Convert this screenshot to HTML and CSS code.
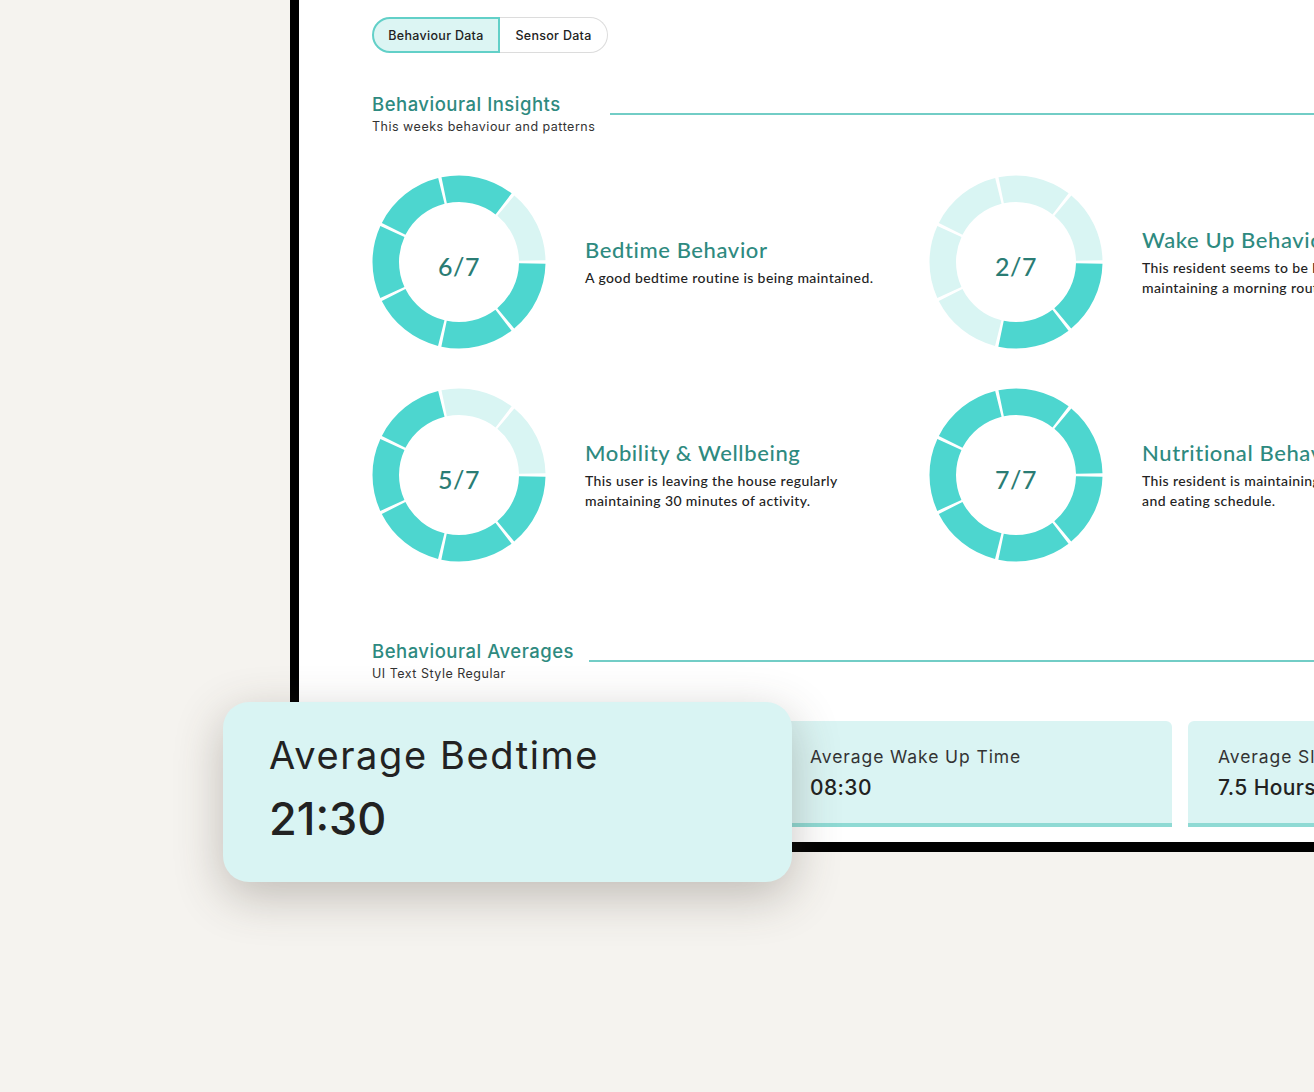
FILE: index.html
```html
<!DOCTYPE html>
<html lang="en">
<head>
    <meta charset="UTF-8">
    <meta name="viewport" content="width=device-width, initial-scale=1.0">
    <title>Behaviour Data</title>
    <link rel="stylesheet" href="styles.css">
</head>
<body>
    <div class="stage">
        <div class="device">
            <div class="tabs">
                <button class="tab tab-active">Behaviour Data</button>
                <button class="tab">Sensor Data</button>
            </div>

            <div class="section-head">
                <div class="section-text">
                    <h2>Behavioural Insights</h2>
                    <p>This weeks behaviour and patterns</p>
                </div>
                <div class="section-line"></div>
            </div>

            <div class="insights">
                <div class="insight">
                    <div class="donut" data-score="6"><span>6/7</span></div>
                    <div class="insight-text">
                        <h3>Bedtime Behavior</h3>
                        <p>A good bedtime routine is being maintained.</p>
                    </div>
                </div>
                <div class="insight">
                    <div class="donut" data-score="2"><span>2/7</span></div>
                    <div class="insight-text">
                        <h3>Wake Up Behaviour</h3>
                        <p>This resident seems to be having trouble<br>maintaining a morning routine.</p>
                    </div>
                </div>
                <div class="insight">
                    <div class="donut" data-score="5"><span>5/7</span></div>
                    <div class="insight-text">
                        <h3>Mobility &amp; Wellbeing</h3>
                        <p>This user is leaving the house regularly<br>maintaining 30 minutes of activity.</p>
                    </div>
                </div>
                <div class="insight">
                    <div class="donut" data-score="7"><span>7/7</span></div>
                    <div class="insight-text">
                        <h3>Nutritional Behaviour</h3>
                        <p>This resident is maintaining a healthy drinking<br>and eating schedule.</p>
                    </div>
                </div>
            </div>

            <div class="section-head section-averages">
                <div class="section-text">
                    <h2>Behavioural Averages</h2>
                    <p>UI Text Style Regular</p>
                </div>
                <div class="section-line"></div>
            </div>

            <div class="averages">
                <!-- first card is shown enlarged by .highlight-card -->
                <div class="avg-card avg-card-raised"></div>
                <div class="avg-card">
                    <div class="avg-label">Average Wake Up Time</div>
                    <div class="avg-value">08:30</div>
                </div>
                <div class="avg-card">
                    <div class="avg-label">Average Sleep Duration</div>
                    <div class="avg-value">7.5 Hours</div>
                </div>
            </div>
        </div>

        <div class="highlight-card">
            <div class="highlight-label">Average Bedtime</div>
            <div class="highlight-value">21:30</div>
        </div>
    </div>

    <script>
// build the 7-part ring for every donut, filled parts start at 3 o'clock
const SVG_NS = 'http://www.w3.org/2000/svg';
const RADIUS = 73.25;
const PARTS = 7;
const GAP = 3;

document.querySelectorAll('.donut').forEach(donut => {
    const score = parseInt(donut.dataset.score, 10);
    const circumference = 2 * Math.PI * RADIUS;
    const part = circumference / PARTS;
    const gapDeg = GAP / circumference * 360;

    const svg = document.createElementNS(SVG_NS, 'svg');
    svg.setAttribute('viewBox', '0 0 174 174');
    svg.setAttribute('width', '174');
    svg.setAttribute('height', '174');

    for (let i = 0; i < PARTS; i++) {
        const seg = document.createElementNS(SVG_NS, 'circle');
        seg.setAttribute('cx', '87');
        seg.setAttribute('cy', '87');
        seg.setAttribute('r', RADIUS);
        seg.setAttribute('class', i < score ? 'seg seg-on' : 'seg seg-off');
        seg.setAttribute('stroke-dasharray', (part - GAP) + ' ' + circumference);
        const angle = i * 360 / PARTS + gapDeg / 2;
        seg.setAttribute('transform', 'rotate(' + angle + ' 87 87)');
        svg.appendChild(seg);
    }

    donut.prepend(svg);
});
    </script>
</body>
</html>
```

FILE: styles.css
```css
* { margin: 0; padding: 0; box-sizing: border-box; }
html, body { overflow: hidden; }
body {
    background-color: #f5f3ef;
    font-family: 'Inter', 'Liberation Sans', sans-serif;
    color: #222;
    width: 1314px;
    height: 1092px;
}
.stage { position: relative; width: 1314px; height: 1092px; }

/* tablet frame, only left and bottom edges are in view */
.device {
    margin-left: 290px;
    width: 1300px;
    height: 852px;
    background-color: #fff;
    border-left: 9px solid #000;
    border-bottom: 10px solid #000;
    padding: 17px 0 0 73px;
}

.tabs { display: inline-flex; height: 36px; }
.tab {
    font-family: 'Inter', sans-serif; font-size: 12.5px; font-weight: 500; color: #222;
    background-color: #fff; border: 1.5px solid #dcdcdc; border-left: none;
    border-radius: 0 18px 18px 0; width: 108px; height: 36px; letter-spacing: 0.3px;
}
.tab-active {
    width: 128px; background-color: #dcf5f3; border: 2px solid #62d0c8;
    border-radius: 18px 0 0 18px;
}

.section-head { display: flex; align-items: center; margin-top: 39px; }
.section-text h2 {
    font-size: 18.5px; font-weight: 500; color: #2e8a80; line-height: 24px; letter-spacing: 0.5px;
}
.section-text p { font-size: 12.5px; color: #333; line-height: 18px; margin-top: 2px; letter-spacing: 0.5px; }
.section-line { flex: 1; height: 2px; background-color: #72cdc6; margin-left: 15px; }
.section-averages { margin-top: 77px; }

.insights {
    display: grid;
    grid-template-columns: 557px 557px;
    grid-auto-rows: 174px;
    row-gap: 39px;
    margin-top: 39px;
}
.insight { display: flex; align-items: center; gap: 39px; }
.donut { display: grid; place-items: center; width: 174px; height: 174px; flex-shrink: 0; }
.donut svg, .donut span { grid-area: 1 / 1; }
.donut span {
    font-family: 'Lato', sans-serif; font-size: 25px; font-weight: 500; color: #2a7c74;
    padding-top: 8px; letter-spacing: 0.5px;
}
.seg { fill: none; stroke-width: 26.5; }
.seg-on { stroke: #4dd6cf; }
.seg-off { stroke: #d9f5f3; }

.insight-text { white-space: nowrap; }
.insight-text h3 {
    font-family: 'Lato', sans-serif; font-size: 22px; font-weight: 500; color: #2e8a80;
    line-height: 28px; letter-spacing: 0.6px;
}
.insight-text p {
    font-family: 'Lato', sans-serif; font-size: 14px; font-weight: 500; color: #222;
    line-height: 20px; margin-top: 4px; letter-spacing: 0.4px;
}

.averages { display: flex; gap: 16px; margin-top: 38px; }
.avg-card {
    flex-shrink: 0; width: 392px; height: 106px;
    background-color: #daf4f3; border-bottom: 4px solid #8fdad4;
    border-radius: 6px 6px 0 0; padding: 24px 30px 0;
    white-space: nowrap;
}
.avg-label { font-size: 17.5px; line-height: 24px; color: #333; letter-spacing: 0.9px; }
.avg-value { font-size: 21px; font-weight: 500; line-height: 28px; margin-top: 5px; color: #222; letter-spacing: 0.4px; }

/* enlarged copy of the first card, floating over the frame */
.highlight-card {
    position: absolute; left: 223px; top: 702px; width: 569px; height: 180px;
    background-color: #d9f4f3; border-radius: 26px;
    box-shadow: 0 14px 48px rgba(70, 60, 50, 0.3);
    padding: 30px 46px 0;
}
.highlight-label { font-size: 38px; line-height: 46px; color: #222; letter-spacing: 1.6px; }
.highlight-value { font-size: 45px; font-weight: 500; line-height: 56px; margin-top: 13px; color: #222; }
```
